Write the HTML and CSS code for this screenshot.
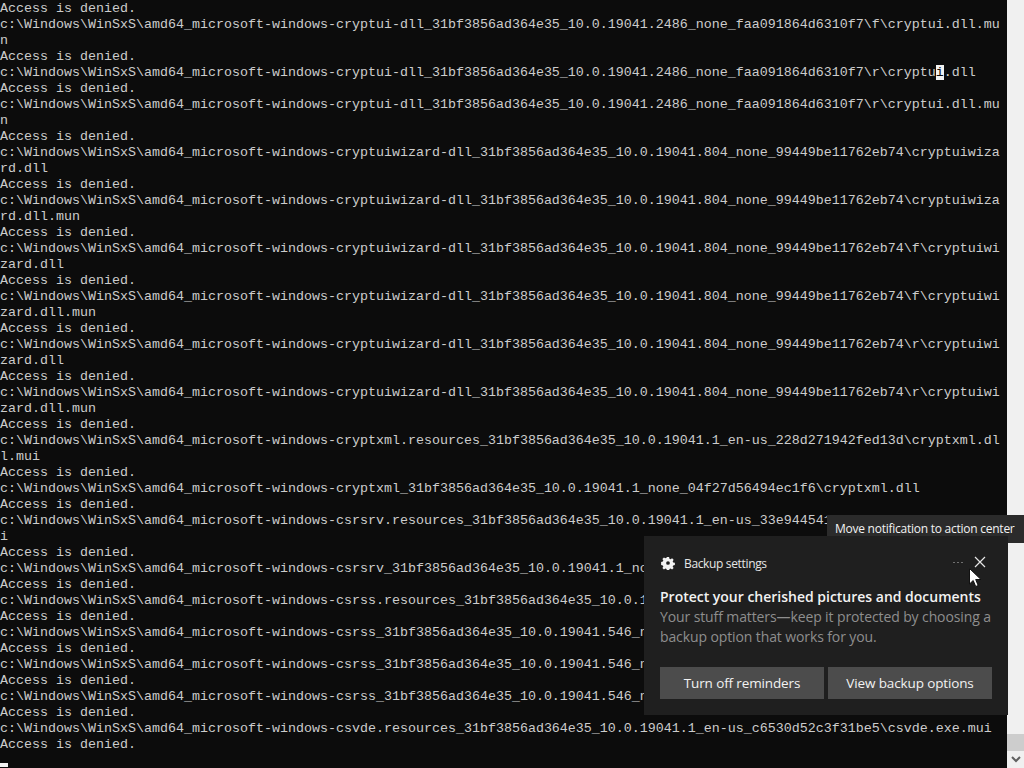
FILE: index.html
```html
<!DOCTYPE html>
<html lang="en">
<head>
<meta charset="utf-8">
<title>Command Prompt</title>
<link rel="stylesheet" href="styles.css">
</head>
<body>
<div class="window">
<pre class="console">Access is denied.
c:\Windows\WinSxS\amd64_microsoft-windows-cryptui-dll_31bf3856ad364e35_10.0.19041.2486_none_faa091864d6310f7\f\cryptui.dll.mu
n
Access is denied.
c:\Windows\WinSxS\amd64_microsoft-windows-cryptui-dll_31bf3856ad364e35_10.0.19041.2486_none_faa091864d6310f7\r\cryptu<span class="selected">i</span>.dll
Access is denied.
c:\Windows\WinSxS\amd64_microsoft-windows-cryptui-dll_31bf3856ad364e35_10.0.19041.2486_none_faa091864d6310f7\r\cryptui.dll.mu
n
Access is denied.
c:\Windows\WinSxS\amd64_microsoft-windows-cryptuiwizard-dll_31bf3856ad364e35_10.0.19041.804_none_99449be11762eb74\cryptuiwiza
rd.dll
Access is denied.
c:\Windows\WinSxS\amd64_microsoft-windows-cryptuiwizard-dll_31bf3856ad364e35_10.0.19041.804_none_99449be11762eb74\cryptuiwiza
rd.dll.mun
Access is denied.
c:\Windows\WinSxS\amd64_microsoft-windows-cryptuiwizard-dll_31bf3856ad364e35_10.0.19041.804_none_99449be11762eb74\f\cryptuiwi
zard.dll
Access is denied.
c:\Windows\WinSxS\amd64_microsoft-windows-cryptuiwizard-dll_31bf3856ad364e35_10.0.19041.804_none_99449be11762eb74\f\cryptuiwi
zard.dll.mun
Access is denied.
c:\Windows\WinSxS\amd64_microsoft-windows-cryptuiwizard-dll_31bf3856ad364e35_10.0.19041.804_none_99449be11762eb74\r\cryptuiwi
zard.dll
Access is denied.
c:\Windows\WinSxS\amd64_microsoft-windows-cryptuiwizard-dll_31bf3856ad364e35_10.0.19041.804_none_99449be11762eb74\r\cryptuiwi
zard.dll.mun
Access is denied.
c:\Windows\WinSxS\amd64_microsoft-windows-cryptxml.resources_31bf3856ad364e35_10.0.19041.1_en-us_228d271942fed13d\cryptxml.dl
l.mui
Access is denied.
c:\Windows\WinSxS\amd64_microsoft-windows-cryptxml_31bf3856ad364e35_10.0.19041.1_none_04f27d56494ec1f6\cryptxml.dll
Access is denied.
c:\Windows\WinSxS\amd64_microsoft-windows-csrsrv.resources_31bf3856ad364e35_10.0.19041.1_en-us_33e944541
i
Access is denied.
c:\Windows\WinSxS\amd64_microsoft-windows-csrsrv_31bf3856ad364e35_10.0.19041.1_no
Access is denied.
c:\Windows\WinSxS\amd64_microsoft-windows-csrss.resources_31bf3856ad364e35_10.0.1
Access is denied.
c:\Windows\WinSxS\amd64_microsoft-windows-csrss_31bf3856ad364e35_10.0.19041.546_n
Access is denied.
c:\Windows\WinSxS\amd64_microsoft-windows-csrss_31bf3856ad364e35_10.0.19041.546_n
Access is denied.
c:\Windows\WinSxS\amd64_microsoft-windows-csrss_31bf3856ad364e35_10.0.19041.546_n
Access is denied.
c:\Windows\WinSxS\amd64_microsoft-windows-csvde.resources_31bf3856ad364e35_10.0.19041.1_en-us_c6530d52c3f31be5\csvde.exe.mui
Access is denied.
<span class="text-cursor"></span></pre>
<div class="scrollbar">
<div class="thumb"></div>
<div class="arrow">
<svg width="10" height="7" viewBox="0 0 10 7" aria-hidden="true"><path d="M1 1l4 4 4-4" fill="none" stroke="#606060" stroke-width="2"/></svg>
</div>
</div>
</div>

<div class="tooltip">Move notification to action center</div>

<section class="toast">
<header class="toast-head">
<svg class="gear" width="14" height="14" viewBox="0 0 14 14" aria-hidden="true"><path d="M5.7 0h2.6l.4 2 1.3.6 1.8-1.1 1.8 1.8-1.1 1.8.6 1.3 2 .4v2.6l-2 .4-.6 1.3 1.1 1.8-1.8 1.8-1.8-1.1-1.3.6-.4 2H5.7l-.4-2-1.3-.6-1.8 1.1-1.8-1.8 1.1-1.8-.6-1.3-2-.4V5.700l2-.4.6-1.3-1.100-1.800 1.800-1.800 1.800 1.100 1.300-.6zM7 4.800a2.200 2.200 0 1 0 0 4.400 2.200 2.200 0 0 0 0-4.400z" fill="#f2f2f2" fill-rule="evenodd" transform="translate(1.050 1.050) scale(.85)"/></svg>
<span class="app-name">Backup settings</span>
<svg class="dots" width="12" height="3" viewBox="0 0 12 3" aria-hidden="true"><path d="M1 1h2v1H1zM5 1h2v1H5zM9 1h2v1H9z" fill="#6f6f6f"/></svg>
<svg class="close" width="12" height="12" viewBox="0 0 12 12" aria-hidden="true"><path d="M1 1l10 10M11 1L1 11" stroke="#e6e6e6" stroke-width="1.200" fill="none"/></svg>
</header>
<h1 class="toast-title">Protect your cherished pictures and documents</h1>
<p class="toast-body">Your stuff matters—keep it protected by choosing a backup option that works for you.</p>
<div class="toast-actions">
<button class="toast-button" type="button">Turn off reminders</button>
<button class="toast-button" type="button">View backup options</button>
</div>
</section>

<svg class="pointer" width="13" height="19" viewBox="0 0 13 19" aria-hidden="true"><path d="M.5.500v15.500l3.700-3.500 2.500 6 2.500-1-2.500-6h5.300z" fill="#fff" stroke="#111" stroke-width="1"/></svg>
</body>
</html>
```
FILE: styles.css
```css
* {
  box-sizing: border-box;
}

html,
body {
  margin: 0;
  height: 768px;
  overflow: hidden;
  background: #0c0c0c;
}

.window {
  display: flex;
  height: 768px;
}

.console {
  flex: 1;
  margin: 0;
  padding-top: 1px;
  overflow: hidden;
  background: #0c0c0c;
  color: #cccccc;
  font-family: "Liberation Mono", monospace;
  font-size: 13.33px;
  line-height: 16px;
  white-space: pre;
}

.selected {
  background: #f2f2f2;
  color: #0c0c0c;
}

.text-cursor {
  display: inline-block;
  width: 8px;
  height: 4px;
  background: #f2f2f2;
  vertical-align: -3px;
}

.scrollbar {
  display: flex;
  flex-direction: column;
  justify-content: flex-end;
  flex: 0 0 17px;
  background: #f0f0f0;
}

.thumb {
  height: 17px;
  background: #cdcdcd;
}

.arrow {
  display: flex;
  align-items: center;
  justify-content: center;
  height: 17px;
}

.tooltip {
  position: absolute;
  left: 827px;
  top: 515px;
  width: 197px;
  height: 28px;
  padding-left: 8px;
  background: #2b2b2b;
  color: #f2f2f2;
  font: 12px/28px "Open Sans", sans-serif;
  letter-spacing: -.25px;
  white-space: nowrap;
}

.toast {
  position: absolute;
  left: 644px;
  top: 536px;
  width: 364px;
  height: 179px;
  padding: 16px;
  background: #1f1f1f;
  color: #fff;
  font-family: "Open Sans", sans-serif;
}

.toast-head {
  display: flex;
  align-items: center;
  height: 22px;
}

.gear {
  flex: none;
  margin-left: 1px;
}

.app-name {
  margin-left: 9px;
  color: #e6e6e6;
  font-size: 12px;
  letter-spacing: -.35px;
}

.dots {
  flex: none;
  margin: -2px 0 0 auto;
}

.close {
  flex: none;
  margin: -2px 6px 0 10px;
}

.toast-title {
  margin: 13px 0 0;
  color: #f2f2f2;
  font-size: 14px;
  font-weight: 600;
  line-height: 20px;
  letter-spacing: -.01px;
  white-space: nowrap;
}

.toast-body {
  width: 335px;
  margin: 0;
  color: #8e8e8e;
  font-size: 14px;
  line-height: 20px;
  letter-spacing: -.11px;
}

.toast-actions {
  display: flex;
  gap: 4px;
  margin-top: 20px;
}

.toast-button {
  width: 164px;
  height: 32px;
  padding: 0;
  border: 0;
  background: #4c4c4c;
  color: #f2f2f2;
  font-family: "Open Sans", sans-serif;
  font-size: 13.5px;
  letter-spacing: -.13px;
}

.pointer {
  position: absolute;
  left: 969px;
  top: 568px;
}
```
